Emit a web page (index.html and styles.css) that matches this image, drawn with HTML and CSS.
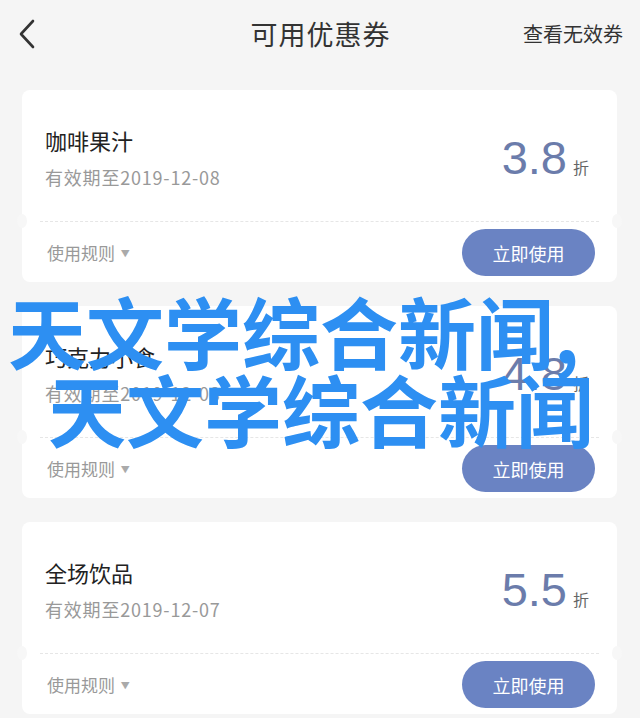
FILE: index.html
```html
<!DOCTYPE html>
<html lang="zh-CN">
<head>
    <meta charset="UTF-8">
    <meta name="viewport" content="width=device-width, initial-scale=1.0">
    <title>可用优惠券</title>
    <link rel="stylesheet" href="styles.css">
</head>
<body>
    <header class="nav">
        <svg class="back" width="18" height="30" viewBox="0 0 18 30">
            <polyline points="15,2 3,15 15,28" fill="none" stroke="#333" stroke-width="2.6" stroke-linecap="round" stroke-linejoin="round"/>
        </svg>
        <h1 class="title">可用优惠券</h1>
        <a class="invalid-link">查看无效券</a>
    </header>

    <main class="coupon-list">
        <div class="coupon">
            <div class="coupon-top">
                <div class="info">
                    <div class="name">咖啡果汁</div>
                    <div class="expire">有效期至2019-12-08</div>
                </div>
                <div class="price">3.8<span class="unit">折</span></div>
            </div>
            <div class="divider"></div>
            <div class="coupon-bottom">
                <span class="rules">使用规则 <span class="arrow">▼</span></span>
                <button class="use-btn">立即使用</button>
            </div>
        </div>

        <div class="coupon">
            <div class="coupon-top">
                <div class="info">
                    <div class="name">巧克力小食</div>
                    <div class="expire">有效期至2019-12-08</div>
                </div>
                <div class="price">4.8<span class="unit">折</span></div>
            </div>
            <div class="divider"></div>
            <div class="coupon-bottom">
                <span class="rules">使用规则 <span class="arrow">▼</span></span>
                <button class="use-btn">立即使用</button>
            </div>
        </div>

        <div class="coupon">
            <div class="coupon-top">
                <div class="info">
                    <div class="name">全场饮品</div>
                    <div class="expire">有效期至2019-12-07</div>
                </div>
                <div class="price">5.5<span class="unit">折</span></div>
            </div>
            <div class="divider"></div>
            <div class="coupon-bottom">
                <span class="rules">使用规则 <span class="arrow">▼</span></span>
                <button class="use-btn">立即使用</button>
            </div>
        </div>
    </main>

    <!-- big caption laid over the screenshot -->
    <div class="caption">
        <div class="caption-line">天文学综合新闻,</div>
        <div class="caption-line second">天文学综合新闻</div>
    </div>
</body>
</html>
```

FILE: styles.css
```css
body {
    margin: 0;
    background-color: #f5f5f5;
    font-family: "Noto Sans CJK SC", "Noto Sans", sans-serif;
    position: relative;
}
.nav {
    height: 66px;
    display: grid;
    grid-template-columns: 1fr auto 1fr;
    align-items: center;
    padding: 0 17px 0 18px;
}
.back {
    display: block;
    margin-top: 1px;
}
.title {
    margin: 0;
    font-size: 27px;
    font-weight: normal;
    color: #333;
    letter-spacing: 1px;
}
.invalid-link {
    justify-self: end;
    font-size: 20px;
    color: #333;
}
.coupon-list {
    display: flex;
    flex-direction: column;
    gap: 24px;
    padding: 24px 23px 0 22px;
}
.coupon {
    position: relative;
    height: 192px;
    background-color: #fff;
    border-radius: 8px;
}
/* little notches on both sides of the dashed line */
.coupon::before, .coupon::after {
    content: "";
    position: absolute;
    top: 124px;
    width: 10px;
    height: 14px;
    border-radius: 50%;
    background-color: #f7f7f7;
}
.coupon::before {
    left: -5px;
}
.coupon::after {
    right: -5px;
}
.coupon-top {
    height: 131px;
    display: flex;
    justify-content: space-between;
    padding: 0 30px 0 23px;
    box-sizing: border-box;
}
.name {
    margin-top: 35px;
    font-size: 22px;
    line-height: 30px;
    color: #222;
}
.expire {
    margin-top: 10px;
    font-size: 18px;
    line-height: 25px;
    letter-spacing: 0.8px;
    color: #999;
}
.price {
    margin-top: 41px;
    font-family: "Liberation Sans", Arial, sans-serif;
    font-size: 47px;
    line-height: 54px;
    color: #6b7cab;
    margin-right: -2px;
}
.unit {
    font-family: "Noto Sans CJK SC", sans-serif;
    font-size: 16px;
    color: #666;
    margin-left: 6px;
}
.divider {
    margin: 0 18px;
    border-top: 1px dashed #e6e6e6;
}
.coupon-bottom {
    display: flex;
    justify-content: space-between;
    align-items: center;
    padding: 7px 22px 0 25px;
}
.rules {
    font-size: 17px;
    color: #999;
}
.arrow {
    font-size: 9px;
    color: #aaa;
    vertical-align: 3px;
    margin-left: 2px;
}
.use-btn {
    width: 133px;
    height: 47px;
    border: none;
    border-radius: 24px;
    background-color: #6a83c3;
    color: #fff;
    font-family: "Noto Sans CJK SC", sans-serif;
    font-size: 18px;
}
.caption {
    position: absolute;
    left: 8px;
    top: 291px;
    color: #2d8ff2;
    font-size: 78px;
    font-weight: bold;
    line-height: 78px;
    white-space: nowrap;
}
.caption-line.second {
    padding-left: 40px;
}
```
